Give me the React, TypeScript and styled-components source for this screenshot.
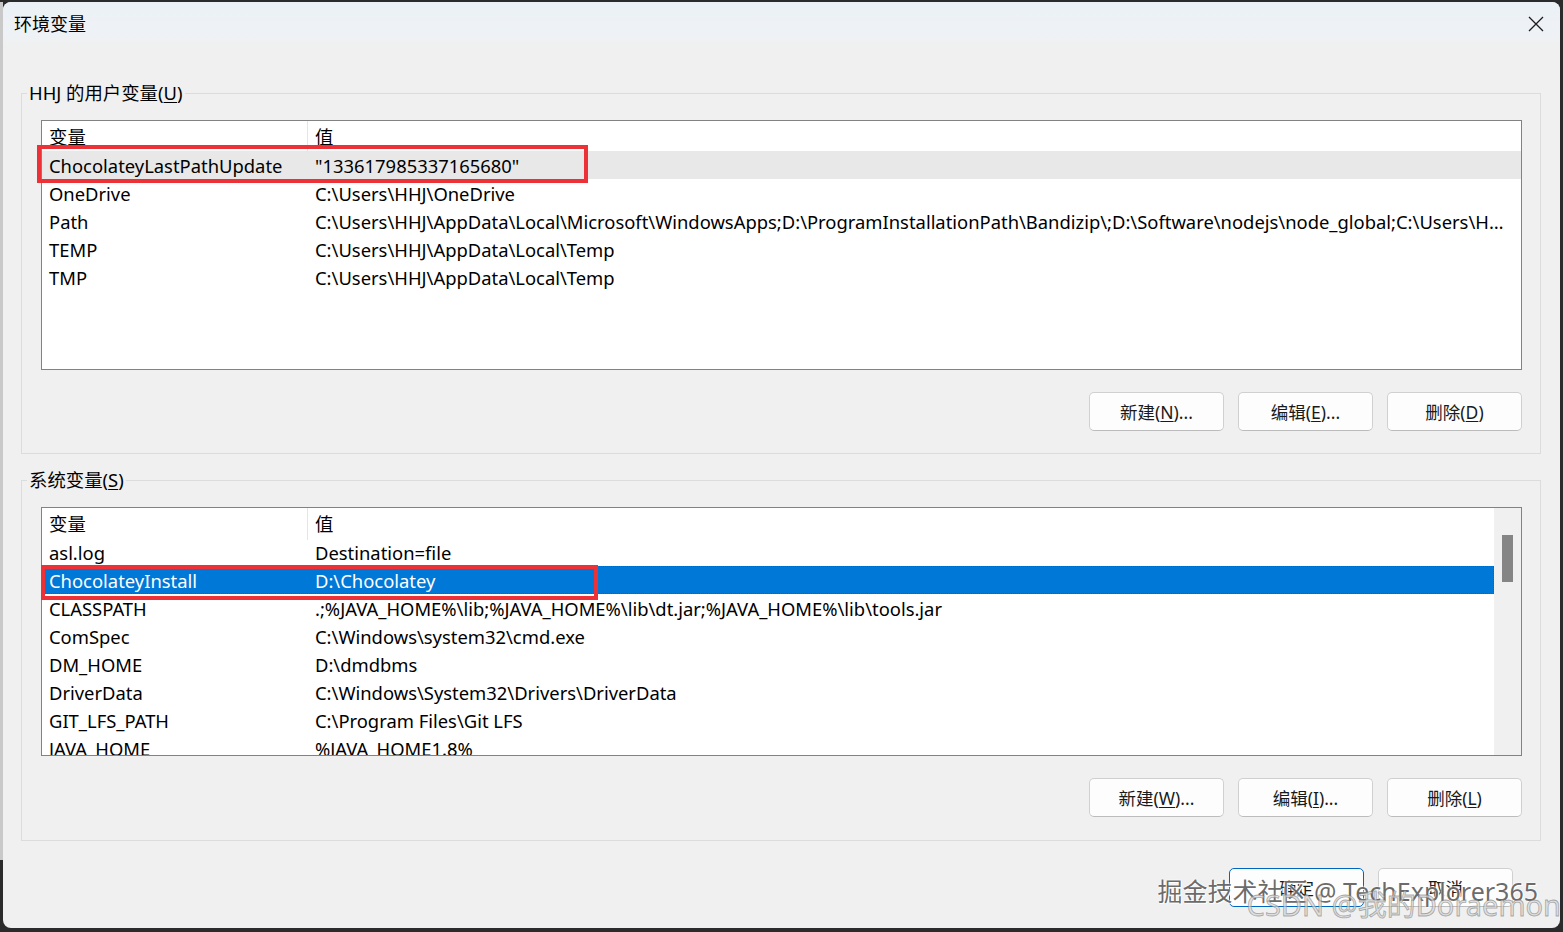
import * as React from "react";
import styled, { createGlobalStyle } from "styled-components";

const GlobalStyle = createGlobalStyle`
    html, body {
        margin: 0;
        padding: 0;
        background: #2b2b2b;
        overflow: hidden;
    }
    body {
        font-family: "Noto Sans", "Noto Sans CJK SC", sans-serif;
        color: #000;
    }
`;

const Screen = styled.div`
    display: flex;
    align-items: flex-start;
    width: 1563px;
    height: 932px;
    padding-top: 2px;
    box-sizing: border-box;
`;

const BehindWindow = styled.div`
    width: 3px;
    height: 858px;
    background: #c9c9c9;
`;

const Dialog = styled.div`
    position: relative;
    display: flex;
    flex-direction: column;
    width: 1557px;
    height: 926px;
    border-radius: 8px;
    background: #f0f0f0;
    overflow: hidden;
    font-size: 18.4px;
`;

const TitleBar = styled.div`
    display: flex;
    align-items: center;
    justify-content: space-between;
    height: 44px;
    padding: 0 16px 0 11px;
    background: linear-gradient(180deg, #ecf1f7 0%, #eef2f6 70%, #f0f0f0 100%);
`;

const Title = styled.span`
    font-size: 18px;
    line-height: 42px;
`;

const CloseButton = styled.div`
    display: flex;
    align-items: center;
    justify-content: center;
    width: 16px;
    height: 16px;
`;

const Body = styled.div`
    display: flex;
    flex-direction: column;
    padding: 35px 19px 0 18px;
`;

const GroupBox = styled.fieldset<{ $gap?: number; $padBottom?: number }>`
    margin: ${(p) => p.$gap ?? 0}px 0 0 0;
    padding: 15px 18px ${(p) => p.$padBottom ?? 22}px 19px;
    border: 1px solid #dcdcdc;
    min-width: 0;
`;

const Legend = styled.legend`
    margin-left: -14px;
    padding: 0 2px;
    line-height: 24px;
`;

const Key = styled.span`
    text-decoration: underline;
    text-underline-offset: 2px;
`;

const ListView = styled.div<{ $height: number }>`
    position: relative;
    display: flex;
    height: ${(p) => p.$height}px;
    border: 1px solid #828282;
    background: #fff;
`;

const Table = styled.div`
    flex: 1;
    min-width: 0;
    overflow: hidden;
`;

const Row = styled.div<{ $state?: "hover" | "selected" }>`
    display: grid;
    grid-template-columns: 266px 1fr;
    height: 28px;
    line-height: 28px;
    background: ${(p) =>
        p.$state === "hover" ? "#e8e8e8" : p.$state === "selected" ? "#0078d7" : "transparent"};
    color: ${(p) => (p.$state === "selected" ? "#fff" : "#000")};
    outline: ${(p) => (p.$state === "selected" ? "1px dotted #2b5f8a" : "none")};
    outline-offset: -1px;
`;

const HeaderRow = styled.div`
    display: grid;
    grid-template-columns: 266px 1fr;
    height: 30px;
    line-height: 32px;
`;

const HeaderCell = styled.div<{ $divider?: boolean }>`
    padding-left: 7px;
    border-right: ${(p) => (p.$divider ? "1px solid #e5e5e5" : "none")};
`;

const Cell = styled.div`
    padding: 2px 10px 0 7px;
    line-height: 26px;
    white-space: nowrap;
    overflow: hidden;
    text-overflow: ellipsis;
`;

const Scrollbar = styled.div`
    width: 27px;
    background: #f0f0f0;
    padding-top: 27px;
    box-sizing: border-box;
`;

const Thumb = styled.div`
    width: 11px;
    height: 47px;
    margin-left: 8px;
    background: #858585;
`;

const Highlight = styled.div<{ $left: number; $top: number; $width: number; $height: number }>`
    position: absolute;
    left: ${(p) => p.$left}px;
    top: ${(p) => p.$top}px;
    width: ${(p) => p.$width}px;
    height: ${(p) => p.$height}px;
    border: 4px solid #ec3237;
    box-sizing: border-box;
    pointer-events: none;
`;

const ButtonRow = styled.div`
    display: flex;
    justify-content: flex-end;
    gap: 14px;
    margin-top: 22px;
`;

const Button = styled.button<{ $primary?: boolean }>`
    width: 135px;
    height: 39px;
    padding: 0;
    font-family: inherit;
    font-size: 17.5px;
    color: #1a1a1a;
    background: #fdfdfd;
    border: 1px solid ${(p) => (p.$primary ? "#0067c0" : "#d0d0d0")};
    border-bottom-color: ${(p) => (p.$primary ? "#0067c0" : "#bcbcbc")};
    border-radius: 5px;
`;

const Footer = styled(ButtonRow)`
    margin-top: 27px;
    padding-right: 47px;
`;

const Watermark = styled.div<{ $right: number; $bottom: number; $size: number; $light?: boolean }>`
    position: absolute;
    right: ${(p) => p.$right}px;
    bottom: ${(p) => p.$bottom}px;
    font-size: ${(p) => p.$size}px;
    white-space: nowrap;
    pointer-events: none;
    color: ${(p) => (p.$light ? "rgba(215, 215, 215, 0.7)" : "rgba(80, 80, 80, 0.85)")};
    -webkit-text-stroke: ${(p) => (p.$light ? "0.8px rgba(120,120,120,0.6)" : "0")};
    text-shadow: ${(p) =>
        p.$light ? "none" : "0 0 2px #fff, 0 0 2px #fff, 1px 1px 0 #fff"};
`;

type Variable = { name: string; value: string; state?: "hover" | "selected" };

const userVars: Variable[] = [
    { name: "ChocolateyLastPathUpdate", value: "\"133617985337165680\"", state: "hover" },
    { name: "OneDrive", value: "C:\\Users\\HHJ\\OneDrive" },
    {
        name: "Path",
        value:
            "C:\\Users\\HHJ\\AppData\\Local\\Microsoft\\WindowsApps;D:\\ProgramInstallationPath\\Bandizip\\;D:\\Software\\nodejs\\node_global;C:\\Users\\HHJ\\AppData\\Roaming\\npm",
    },
    { name: "TEMP", value: "C:\\Users\\HHJ\\AppData\\Local\\Temp" },
    { name: "TMP", value: "C:\\Users\\HHJ\\AppData\\Local\\Temp" },
];

const systemVars: Variable[] = [
    { name: "asl.log", value: "Destination=file" },
    { name: "ChocolateyInstall", value: "D:\\Chocolatey", state: "selected" },
    { name: "CLASSPATH", value: ".;%JAVA_HOME%\\lib;%JAVA_HOME%\\lib\\dt.jar;%JAVA_HOME%\\lib\\tools.jar" },
    { name: "ComSpec", value: "C:\\Windows\\system32\\cmd.exe" },
    { name: "DM_HOME", value: "D:\\dmdbms" },
    { name: "DriverData", value: "C:\\Windows\\System32\\Drivers\\DriverData" },
    { name: "GIT_LFS_PATH", value: "C:\\Program Files\\Git LFS" },
    { name: "JAVA_HOME", value: "%JAVA_HOME1.8%" },
];

const VariableTable = ({ rows }: { rows: Variable[] }) => (
    <Table>
        <HeaderRow>
            <HeaderCell $divider>变量</HeaderCell>
            <HeaderCell>值</HeaderCell>
        </HeaderRow>
        {rows.map((row) => (
            <Row key={row.name} $state={row.state}>
                <Cell>{row.name}</Cell>
                <Cell>{row.value}</Cell>
            </Row>
        ))}
    </Table>
);

const CloseIcon = () => (
    <svg width="16" height="16" viewBox="0 0 16 16">
        <path d="M1 1 L15 15 M15 1 L1 15" stroke="#1b1b1b" strokeWidth="1.3" fill="none" />
    </svg>
);

export default function App() {
    return (
        <>
            <GlobalStyle />
            <Screen>
                <BehindWindow />
                <Dialog>
                    <TitleBar>
                        <Title>环境变量</Title>
                        <CloseButton>
                            <CloseIcon />
                        </CloseButton>
                    </TitleBar>
                    <Body>
                        <GroupBox>
                            <Legend>
                                HHJ 的用户变量(<Key>U</Key>)
                            </Legend>
                            <ListView $height={248}>
                                <VariableTable rows={userVars} />
                                <Highlight $left={-5} $top={24} $width={551} $height={38} />
                            </ListView>
                            <ButtonRow>
                                <Button>新建(<Key>N</Key>)...</Button>
                                <Button>编辑(<Key>E</Key>)...</Button>
                                <Button>删除(<Key>D</Key>)</Button>
                            </ButtonRow>
                        </GroupBox>
                        <GroupBox $gap={14} $padBottom={23}>
                            <Legend>
                                系统变量(<Key>S</Key>)
                            </Legend>
                            <ListView $height={247}>
                                <VariableTable rows={systemVars} />
                                <Scrollbar>
                                    <Thumb />
                                </Scrollbar>
                                <Highlight $left={-1} $top={57} $width={557} $height={35} />
                            </ListView>
                            <ButtonRow>
                                <Button>新建(<Key>W</Key>)...</Button>
                                <Button>编辑(<Key>I</Key>)...</Button>
                                <Button>删除(<Key>L</Key>)</Button>
                            </ButtonRow>
                        </GroupBox>
                    </Body>
                    <Footer>
                        <Button $primary>确定</Button>
                        <Button>取消</Button>
                    </Footer>
                    <Watermark $right={22} $bottom={20} $size={25}>
                        掘金技术社区 @ TechExplorer365
                    </Watermark>
                    <Watermark $right={-1} $bottom={4} $size={29} $light>
                        CSDN @我的Doraemon
                    </Watermark>
                </Dialog>
            </Screen>
        </>
    );
}
